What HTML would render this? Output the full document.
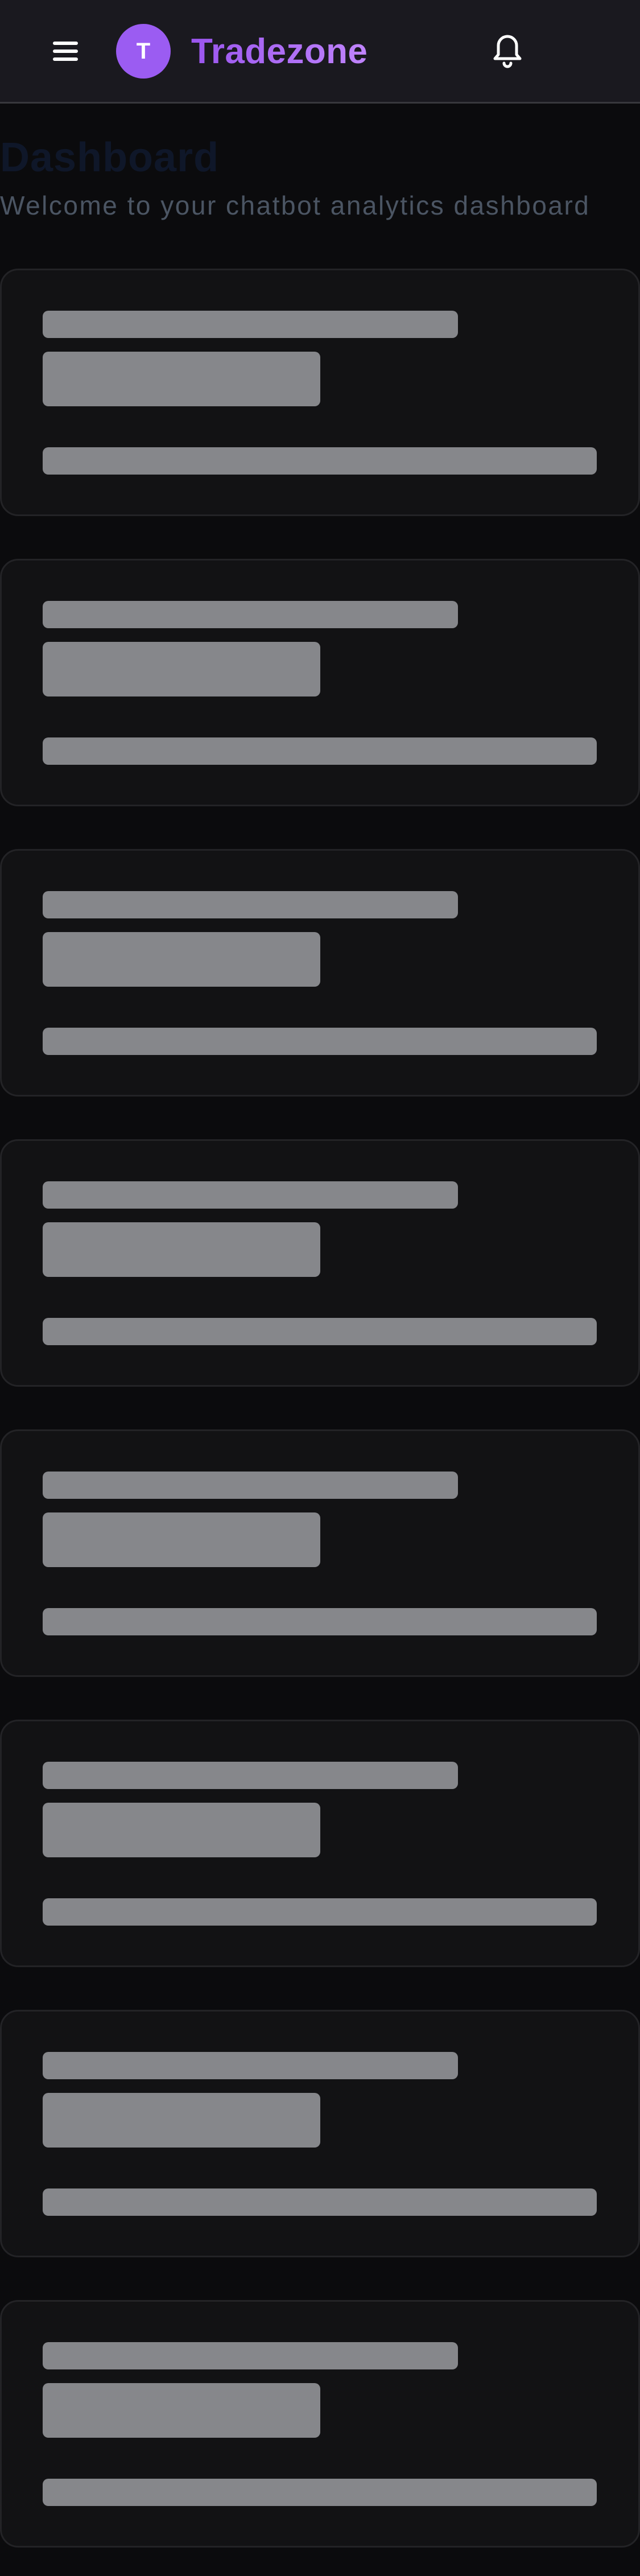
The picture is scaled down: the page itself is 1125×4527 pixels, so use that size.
<!DOCTYPE html>
<html><head><meta charset="utf-8"><style>
*{margin:0;padding:0;box-sizing:border-box}
body{width:1125px;height:4527px;background:#0b0b0d;font-family:"Liberation Sans",sans-serif;position:relative;overflow:hidden}
.hdr{position:absolute;left:0;top:0;width:1125px;height:182px;background:#1a191f;border-bottom:3px solid #38383d}
.ham{position:absolute;left:92px;top:72px}
.av{position:absolute;left:204px;top:42px;width:96px;height:96px;border-radius:50%;background:#9b5cf2;color:#fff;font-weight:bold;font-size:40px;line-height:96px;text-align:center}
.brand{position:absolute;left:336px;top:55px;font-size:62px;font-weight:bold;letter-spacing:0.4px;background:linear-gradient(90deg,#9a55ee,#c084fc);-webkit-background-clip:text;color:transparent}
.bell{position:absolute;left:862px;top:58px}
h1{position:absolute;left:0;top:236px;font-size:72px;font-weight:bold;color:#0f1729;letter-spacing:1px}
.sub{position:absolute;left:0;top:334px;font-size:46px;color:#4b5563;letter-spacing:2.5px;white-space:nowrap}
.card{position:absolute;left:0;width:1125px;height:435px;background:#121214;border:3px solid #232326;border-radius:32px}
.b{position:absolute;left:72px;background:#86878b;border-radius:10px}
</style></head><body>
<div class="hdr">
<svg class="ham" width="46" height="36" viewBox="0 0 46 36"><g stroke="#fff" stroke-width="6" stroke-linecap="round"><line x1="4" y1="4" x2="42" y2="4"/><line x1="4" y1="18" x2="42" y2="18"/><line x1="4" y1="32" x2="42" y2="32"/></g></svg>
<div class="av">T</div>
<div class="brand">Tradezone</div>
<svg class="bell" width="60" height="64" viewBox="0 0 60 64"><path d="M8 45 L14 38 V22 A16 16 0 0 1 46 22 V38 L52 45 Z" fill="none" stroke="#fff" stroke-width="5" stroke-linejoin="round"/><path d="M24 53 A6 6 0 0 0 36 53" fill="none" stroke="#fff" stroke-width="5" stroke-linecap="round"/></svg>
</div>
<h1>Dashboard</h1>
<div class="sub">Welcome to your chatbot analytics dashboard</div>
<div class="card" style="top:472px"><div class="b" style="top:71px;width:730px;height:48px"></div><div class="b" style="top:143px;width:488px;height:96px"></div><div class="b" style="top:311px;width:974px;height:48px"></div></div>
<div class="card" style="top:982px"><div class="b" style="top:71px;width:730px;height:48px"></div><div class="b" style="top:143px;width:488px;height:96px"></div><div class="b" style="top:311px;width:974px;height:48px"></div></div>
<div class="card" style="top:1492px"><div class="b" style="top:71px;width:730px;height:48px"></div><div class="b" style="top:143px;width:488px;height:96px"></div><div class="b" style="top:311px;width:974px;height:48px"></div></div>
<div class="card" style="top:2002px"><div class="b" style="top:71px;width:730px;height:48px"></div><div class="b" style="top:143px;width:488px;height:96px"></div><div class="b" style="top:311px;width:974px;height:48px"></div></div>
<div class="card" style="top:2512px"><div class="b" style="top:71px;width:730px;height:48px"></div><div class="b" style="top:143px;width:488px;height:96px"></div><div class="b" style="top:311px;width:974px;height:48px"></div></div>
<div class="card" style="top:3022px"><div class="b" style="top:71px;width:730px;height:48px"></div><div class="b" style="top:143px;width:488px;height:96px"></div><div class="b" style="top:311px;width:974px;height:48px"></div></div>
<div class="card" style="top:3532px"><div class="b" style="top:71px;width:730px;height:48px"></div><div class="b" style="top:143px;width:488px;height:96px"></div><div class="b" style="top:311px;width:974px;height:48px"></div></div>
<div class="card" style="top:4042px"><div class="b" style="top:71px;width:730px;height:48px"></div><div class="b" style="top:143px;width:488px;height:96px"></div><div class="b" style="top:311px;width:974px;height:48px"></div></div>
</body></html>
